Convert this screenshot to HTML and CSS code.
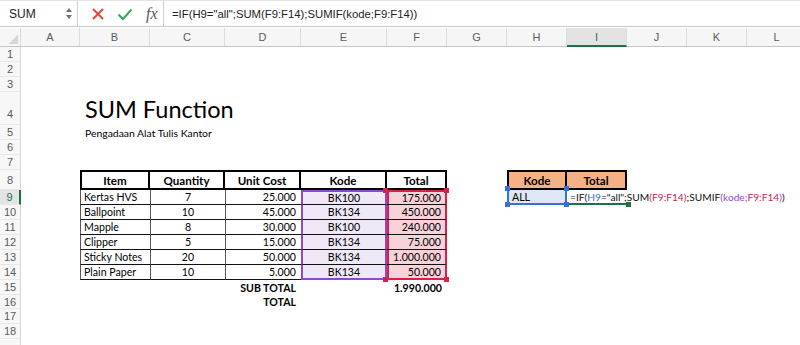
FILE: index.html
```html
<!DOCTYPE html>
<html lang="id">
<head>
    <meta charset="UTF-8">
    <meta name="viewport" content="width=device-width, initial-scale=1.0">
    <title>SUM Function</title>
    <link rel="stylesheet" href="styles.css">
</head>
<body>
    <!-- Formula bar -->
    <div class="toolbar">
        <div class="namebox">
            <span>SUM</span>
            <span class="spin"><i class="up"></i><i class="down"></i></span>
        </div>
        <div class="actions">
            <svg class="cancel" width="14" height="14" viewBox="0 0 14 14"><path d="M2 2 L12 12 M12 2 L2 12"/></svg>
            <svg class="enter" width="16" height="14" viewBox="0 0 16 14"><path d="M1.5 7.5 L6 12 L14.5 2.5"/></svg>
            <span class="fx">fx</span>
        </div>
        <div class="formula">=IF(H9="all";SUM(F9:F14);SUMIF(kode;F9:F14))</div>
    </div>

    <!-- Sheet -->
    <div class="sheet">
        <div class="row colhead">
            <div class="corner"></div>
            <div>A</div>
            <div>B</div>
            <div>C</div>
            <div>D</div>
            <div>E</div>
            <div>F</div>
            <div>G</div>
            <div>H</div>
            <div class="sel">I</div>
            <div>J</div>
            <div>K</div>
            <div>L</div>
        </div>

        <div class="row"><div class="num">1</div></div>
        <div class="row"><div class="num">2</div></div>
        <div class="row"><div class="num">3</div></div>
        <div class="row h33">
            <div class="num">4</div><div></div>
            <div class="cell title">SUM Function</div>
        </div>
        <div class="row">
            <div class="num">5</div><div></div>
            <div class="cell note">Pengadaan Alat Tulis Kantor</div>
        </div>
        <div class="row"><div class="num">6</div></div>
        <div class="row"><div class="num">7</div></div>

        <div class="row h20">
            <div class="num">8</div><div></div>
            <div class="cell th first">Item</div>
            <div class="cell th">Quantity</div>
            <div class="cell th">Unit Cost</div>
            <div class="cell th">Kode</div>
            <div class="cell th">Total</div>
            <div></div>
            <div class="cell th first orange">Kode</div>
            <div class="cell th orange">Total</div>
        </div>
        <div class="row active">
            <div class="num">9</div><div></div>
            <div class="cell td">Kertas HVS</div>
            <div class="cell td center">7</div>
            <div class="cell td right">25.000</div>
            <div class="cell td kode top">BK100</div>
            <div class="cell td total top"><i class="hd tl"></i><i class="hd tr"></i>175.000</div>
            <div></div>
            <div class="cell pick"><i class="hd tl"></i><i class="hd tr"></i><i class="hd bl"></i><i class="hd br"></i>ALL</div>
            <div class="cell editing"><i class="hd br"></i><span>=IF(<b class="ref-h">H9</b>="all";SUM<b class="ref-f">(F9:F14)</b>;SUMIF<b class="ref-k">(kode;</b><b class="ref-f">F9:F14</b><b class="ref-k">)</b>)</span></div>
        </div>
        <div class="row">
            <div class="num">10</div><div></div>
            <div class="cell td">Ballpoint</div>
            <div class="cell td center">10</div>
            <div class="cell td right">45.000</div>
            <div class="cell td kode">BK134</div>
            <div class="cell td total">450.000</div>
        </div>
        <div class="row">
            <div class="num">11</div><div></div>
            <div class="cell td">Mapple</div>
            <div class="cell td center">8</div>
            <div class="cell td right">30.000</div>
            <div class="cell td kode">BK100</div>
            <div class="cell td total">240.000</div>
        </div>
        <div class="row">
            <div class="num">12</div><div></div>
            <div class="cell td">Clipper</div>
            <div class="cell td center">5</div>
            <div class="cell td right">15.000</div>
            <div class="cell td kode">BK134</div>
            <div class="cell td total">75.000</div>
        </div>
        <div class="row">
            <div class="num">13</div><div></div>
            <div class="cell td">Sticky Notes</div>
            <div class="cell td center">20</div>
            <div class="cell td right">50.000</div>
            <div class="cell td kode">BK134</div>
            <div class="cell td total">1.000.000</div>
        </div>
        <div class="row">
            <div class="num">14</div><div></div>
            <div class="cell td">Plain Paper</div>
            <div class="cell td center">10</div>
            <div class="cell td right">5.000</div>
            <div class="cell td kode bottom">BK134</div>
            <div class="cell td total bottom"><i class="hd bl"></i><i class="hd br"></i>50.000</div>
        </div>

        <div class="row">
            <div class="num">15</div><div></div><div></div><div></div>
            <div class="cell sum">SUB TOTAL</div>
            <div></div>
            <div class="cell sum">1.990.000</div>
        </div>
        <div class="row h14">
            <div class="num">16</div><div></div><div></div><div></div>
            <div class="cell sum">TOTAL</div>
        </div>
        <div class="row"><div class="num">17</div></div>
        <div class="row"><div class="num">18</div></div>
        <div class="row"><div class="num"></div></div>
    </div>
</body>
</html>
```

FILE: styles.css
```css
body {
    margin: 0;
    background: #ffffff;
    font-family: "Lato", "Liberation Sans", sans-serif;
    color: #000;
    overflow: hidden;
}

/* Formula bar */
.toolbar {
    display: flex;
    align-items: center;
    height: 27px;
    border-top: 1px solid #e4e4e4;
    border-bottom: 1px solid #c6c6c6;
    box-sizing: border-box;
    font-family: "Liberation Sans", Arial, sans-serif;
}
.namebox {
    width: 78px;
    height: 100%;
    display: flex;
    align-items: center;
    justify-content: space-between;
    padding: 0 5px 0 9px;
    box-sizing: border-box;
    border-right: 1px solid #d0d0d0;
    font-size: 12px;
    color: #222;
}
.spin {
    display: flex;
    flex-direction: column;
    gap: 3px;
}
.spin i {
    width: 0;
    height: 0;
    border-left: 3.5px solid transparent;
    border-right: 3.5px solid transparent;
}
.spin .up { border-bottom: 4px solid #707070; }
.spin .down { border-top: 4px solid #707070; }
.actions {
    width: 86px;
    height: 100%;
    display: flex;
    align-items: center;
    padding-left: 13px;
    box-sizing: border-box;
    border-right: 1px solid #d0d0d0;
}
.cancel {
    fill: none;
    stroke: #e5463c;
    stroke-width: 2;
}
.enter {
    margin-left: 12px;
    fill: none;
    stroke: #33a852;
    stroke-width: 2;
}
.fx {
    margin-left: 13px;
    font-family: "Liberation Serif", serif;
    font-style: italic;
    font-size: 16px;
    color: #555;
}
.formula {
    padding-left: 8px;
    font-size: 11.3px;
    color: #222;
    white-space: nowrap;
}

/* Sheet grid */
.sheet {
    margin-top: 1px;
}
.row {
    display: grid;
    grid-template-columns: 21px 59px 70px 75px 76px 86px 60px 60px 60px 60px 60px 60px 60px;
    height: 15px;
    font-size: 10.6px;
}
.row.h14 { height: 14px; }
.row.h20 { height: 20px; }
.row.h33 { height: 33px; }

.colhead {
    height: 19px;
    background: #f6f6f6;
    border-bottom: 1px solid #c4c4c4;
    box-sizing: border-box;
    font-family: "Liberation Sans", Arial, sans-serif;
    font-size: 11px;
    color: #5a5a5a;
}
.colhead div {
    display: flex;
    align-items: center;
    justify-content: center;
    border-right: 1px solid #dcdcdc;
}
.colhead .sel {
    background: #e3e3e3;
    color: #1e7145;
    border-bottom: 2px solid #1e7145;
    margin-bottom: -1px;
}
.corner {
    background: linear-gradient(135deg, transparent 62%, #d6d6d6 62%);
    background-size: 12px 12px;
    background-position: right 2px bottom 2px;
    background-repeat: no-repeat;
}

.num {
    display: flex;
    align-items: center;
    justify-content: center;
    background: #f7f7f7;
    border-right: 1px solid #d4d4d4;
    border-bottom: 1px solid #e8e8e8;
    box-sizing: border-box;
    font-family: "Liberation Sans", Arial, sans-serif;
    font-size: 11px;
    color: #5a5a5a;
}
.h33 .num {
    align-items: flex-end;
    padding-bottom: 4px;
}
.active .num {
    background: #e4e4e4;
    color: #1e7145;
    border-right: 2px solid #1e7145;
}

/* Cells */
.cell {
    position: relative;
    display: flex;
    align-items: center;
    padding: 0 3px;
    box-sizing: border-box;
    white-space: nowrap;
}
.title {
    align-items: flex-end;
    padding-left: 5px;
    padding-bottom: 4px;
    font-size: 23.5px;
    line-height: 1;
}
.note {
    padding-left: 5px;
    font-size: 10.4px;
}

.th {
    justify-content: center;
    font-weight: bold;
    font-size: 11.6px;
    border-top: 2px solid #000;
    border-bottom: 2px solid #000;
    border-right: 2px solid #000;
}
.th.first { border-left: 2px solid #000; }
.th.orange { background: #f5b183; }

.td {
    border-left: 1px solid #555;
    border-bottom: 1px solid #111;
}
.td.center { justify-content: center; }
.td.right { justify-content: flex-end; padding-right: 5px; }

.kode {
    justify-content: center;
    background: #efe9f7;
    border-left: 2px solid #9248c6;
    border-right: 2px solid #9248c6;
}
.kode.top { border-top: 2px solid #9248c6; }
.kode.bottom { border-bottom: 2px solid #9248c6; }

.total {
    justify-content: flex-end;
    padding-right: 4px;
    background: #f7d2d8;
    border-left: 0;
    border-right: 2px solid #d8204a;
    box-shadow: inset 2px 0 0 #d8204a;
}
.total.top { border-top: 2px solid #d8204a; }
.total.bottom { border-bottom: 2px solid #d8204a; }
.total .hd { background: #d8204a; }

.pick {
    background: #dfe7f5;
    border-left: 2px solid #3b6fd6;
    border-right: 2px solid #3b6fd6;
    border-bottom: 2px solid #3b6fd6;
}
.pick .hd { background: #3b6fd6; }

.editing {
    z-index: 2;
    padding-left: 3px;
    font-size: 10.2px;
    border-bottom: 2px solid #1e7145;
    color: #111;
}
.editing .hd { background: #1e7145; }
.editing b { font-weight: normal; }
.ref-h { color: #3b6fd6; }
.ref-f { color: #d8204a; }
.ref-k { color: #9248c6; }

/* Selection handles */
.hd {
    position: absolute;
    width: 5px;
    height: 5px;
    z-index: 3;
}
.hd.tl { top: -4px; left: -4px; }
.hd.tr { top: -4px; right: -4px; }
.hd.bl { bottom: -4px; left: -4px; }
.hd.br { bottom: -4px; right: -4px; }

.sum {
    justify-content: flex-end;
    padding-right: 5px;
    font-weight: bold;
}
```
